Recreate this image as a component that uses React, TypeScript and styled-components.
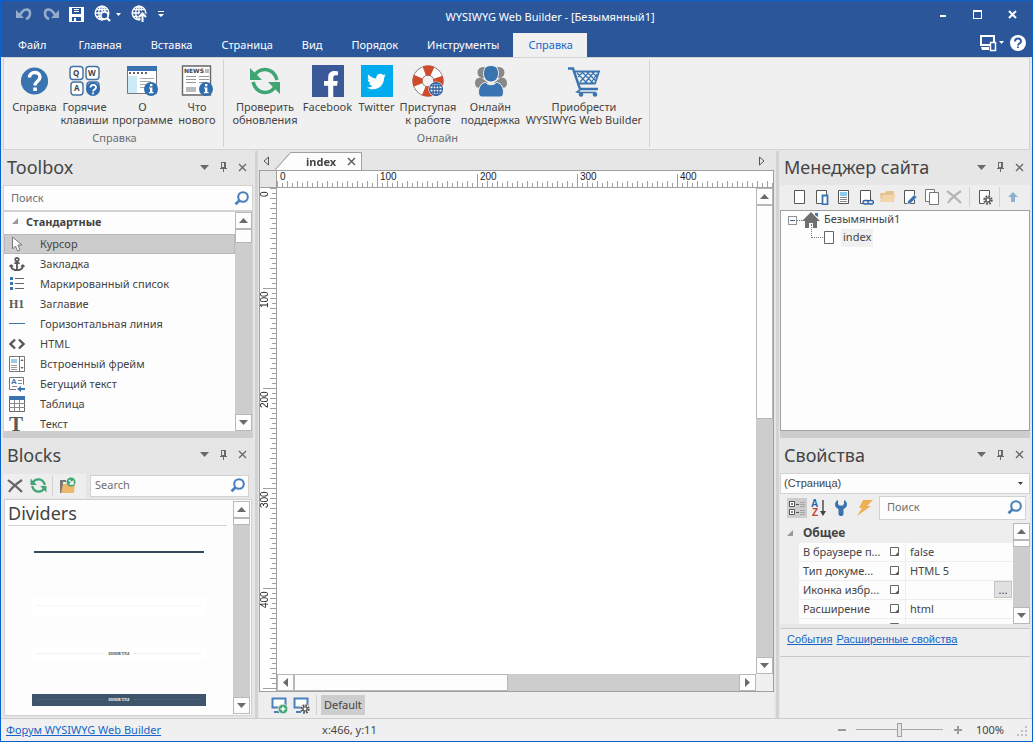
import React from "react";
import styled, { createGlobalStyle, css } from "styled-components";
import { FaAnchor, FaFacebookF, FaTwitter } from "react-icons/fa";

const c = {
  frame: "#0a63cc",
  blue: "#2b579a",
  icon: "#3a74b0",
  face: "#f0f0f0",
  panel: "#e6e6e6",
  bar: "#eeeeee",
  track: "#cdcdcd",
  line: "#d2d2d2",
  edge: "#a0a0a0",
  text: "#444444",
  grey: "#6a6a6a",
  green: "#3fa573",
};

const Global = createGlobalStyle`
  * { box-sizing: border-box; }
  body { margin: 0; background: ${c.panel}; }
  body, button, input, select { font-family: "Noto Sans", sans-serif; font-size: 11px; color: ${c.text}; }
  button { padding: 0; border: 0; background: none; display: flex; align-items: center; justify-content: center; }
  svg { display: block; flex: none; }
`;

/* ---------- window ---------- */
const Window = styled.div`
  height: 100vh;
  min-height: 600px;
  display: flex;
  flex-direction: column;
  border: 1px solid ${c.frame};
  overflow: hidden;
`;
const TitleBar = styled.header`
  height: 32px;
  flex: none;
  display: flex;
  align-items: center;
  background: ${c.blue};
  color: #fff;
`;
const QuickTools = styled.div`
  display: flex;
  align-items: center;
  padding: 0 0 6px 15px;
  width: 174px;
`;
const QuickButton = styled.button<{ $w?: number; $dim?: boolean }>`
  width: ${(p) => p.$w ?? 26}px;
  height: 20px;
  justify-content: flex-start;
  color: #fff;
  opacity: ${(p) => (p.$dim ? 0.5 : 1)};
`;
const Title = styled.h1`
  flex: 1;
  margin: 0;
  padding-bottom: 2px;
  font-size: 11px;
  font-weight: 400;
  text-align: center;
`;
const WindowButtons = styled.div`
  display: flex;
  padding: 0 2px 6px 0;
`;
const WindowButton = styled.button`
  width: 35px;
  height: 20px;
  color: #fff;
`;
const Menu = styled.nav`
  height: 24px;
  flex: none;
  display: flex;
  align-items: stretch;
  padding-left: 2px;
  background: ${c.blue};
`;
const MenuTab = styled.button<{ $active?: boolean }>`
  padding: 0 14px 2px 15px;
  color: ${(p) => (p.$active ? "#1a66c8" : "#fff")};
  background: ${(p) => (p.$active ? c.face : "none")};
  &:first-child { padding-right: 17px; }
`;
const MenuEnd = styled.div`
  margin-left: auto;
  display: flex;
  align-items: center;
  gap: 6px;
  padding: 0 6px 4px 0;
  color: #fff;
  button { color: #fff; }
`;

/* ---------- ribbon ---------- */
const Ribbon = styled.section`
  flex: none;
  height: 93px;
  margin: 0 2px 1px;
  display: flex;
  border: 1px solid ${c.line};
  background: ${c.face};
`;
const RibbonGroup = styled.div`
  display: flex;
  flex-direction: column;
  justify-content: space-between;
  margin: 2px 0;
  padding: 5px 4px 2px 6px;
  border-right: 1px solid ${c.line};
`;
const RibbonButtons = styled.div`
  display: flex;
`;
const RibbonButton = styled.button<{ $w: number }>`
  width: ${(p) => p.$w}px;
  flex-direction: column;
  justify-content: flex-start;
  line-height: 13px;
  white-space: pre;
  gap: 3px;
`;
const GroupLabel = styled.div`
  text-align: center;
  line-height: 15px;
  color: #6c6c6c;
`;
const LogoTile = styled.span<{ $bg: string; $low?: boolean }>`
  width: 32px;
  height: 32px;
  display: flex;
  align-items: ${(p) => (p.$low ? "flex-end" : "center")};
  justify-content: ${(p) => (p.$low ? "flex-end" : "center")};
  color: #fff;
  background: ${(p) => p.$bg};
`;

/* ---------- docking layout ---------- */
const Workspace = styled.main`
  flex: 1;
  min-height: 0;
  display: flex;
  padding: 0 2px;
  background: ${c.panel};
`;
const Side = styled.aside`
  width: 250px;
  flex: none;
  display: flex;
  flex-direction: column;
`;
const Splitter = styled.div`
  width: 3px;
  flex: none;
  margin: 0 1px 0 2px;
  background: #d3d3d3;
`;
const SideSplitter = styled.div`
  height: 7px;
  flex: none;
  background: ${c.track};
`;
const Panel = styled.section`
  flex: 1 1 0;
  min-height: 0;
  display: flex;
  flex-direction: column;
  &:last-child { padding-top: 1px; }
`;
const PanelHead = styled.div`
  height: 34px;
  flex: none;
  display: flex;
  align-items: center;
  padding: 0 1px 2px 4px;
  h2 {
    flex: 1;
    margin: 0;
    font-size: 18px;
    font-weight: 400;
    line-height: 24px;
  }
`;
const HeadButton = styled.button`
  width: 19px;
  height: 16px;
  color: ${c.grey};
`;

const SearchBox = styled.label<{ $h: number; $pad: number }>`
  flex: 1;
  min-width: 0;
  height: ${(p) => p.$h}px;
  display: flex;
  align-items: center;
  border: 1px solid ${c.line};
  background: #fdfdfd;
  padding: 0 3px 0 ${(p) => p.$pad}px;
  input {
    flex: 1;
    min-width: 0;
    border: 0;
    outline: 0;
    padding: 0 0 2px;
    background: none;
  }
  input::placeholder { color: #707070; opacity: 1; }
`;
const Line = styled.div`
  display: flex;
  flex: none;
`;

/* ---------- scroll bars ---------- */
const Scroll = styled.div<{ $across?: boolean }>`
  display: flex;
  flex: none;
  flex-direction: ${(p) => (p.$across ? "row" : "column")};
  ${(p) => (p.$across ? "height: 17px;" : "width: 17px;")}
  justify-content: space-between;
  background: ${c.track};
`;
const ScrollButton = styled.button`
  width: 17px;
  height: 17px;
  flex: none;
  border: 1px solid #b8b8b8;
  background: #fdfdfd;
  color: #6a6a6a;
`;
const ScrollTrack = styled.div`
  flex: 1;
  min-height: 0;
`;
const ScrollThumb = styled.div<{ $across?: boolean; $size: string }>`
  border: 1px solid #b8b8b8;
  background: #fdfdfd;
  ${(p) => (p.$across ? css`width: ${p.$size}; height: 17px;` : css`height: ${p.$size}; width: 17px;`)}
`;

/* ---------- toolbox ---------- */
const ToolArea = styled.div`
  flex: 1;
  min-height: 0;
  display: flex;
  border: solid ${c.line};
  border-width: 1px 1px 0 1px;
  background: #fdfdfd;
  overflow: hidden;
`;
const ToolList = styled.div`
  flex: 1;
  min-width: 0;
  overflow: hidden;
`;
const ToolGroup = styled.button`
  height: 22px;
  width: 100%;
  justify-content: flex-start;
  gap: 8px;
  padding: 0 0 4px 8px;
  font-weight: 700;
`;
const ToolRow = styled.button<{ $on?: boolean }>`
  width: 100%;
  height: 20px;
  justify-content: flex-start;
  padding: 0 4px;
  gap: 15px;
  border: 1px solid ${(p) => (p.$on ? "#b8b8b8" : "transparent")};
  background: ${(p) => (p.$on ? "#cccccc" : "none")};
`;
const RowLabel = styled.span`
  padding-bottom: 2px;
`;

/* ---------- blocks ---------- */
const BlockBar = styled.div`
  display: flex;
  align-items: center;
  flex: none;
  height: 26px;
  margin-right: 4px;
`;
const BarTools = styled.div`
  display: flex;
  align-items: center;
  width: 83px;
  height: 24px;
  margin-right: 4px;
  background: ${c.bar};
`;
const BarButton = styled.button<{ $w?: number; $on?: boolean }>`
  width: ${(p) => p.$w ?? 22}px;
  height: 20px;
  flex: none;
  background: ${(p) => (p.$on ? c.track : "none")};
`;
const BarRule = styled.span<{ $gap?: number }>`
  width: 1px;
  height: 20px;
  flex: none;
  margin: 0 ${(p) => p.$gap ?? 5}px;
  background: ${c.line};
`;
const BlockArea = styled.div`
  flex: 1;
  min-height: 0;
  display: flex;
  margin: 0 1px 2px;
  padding: 1px;
  border: 1px solid ${c.line};
  background: #fdfdfd;
`;
const BlockList = styled.div`
  flex: 1;
  min-width: 0;
  overflow: hidden;
  padding: 0 6px 0 2px;
  h3 {
    margin: 0;
    font-size: 18px;
    font-weight: 400;
    line-height: 24px;
    border-bottom: 1px solid ${c.line};
  }
`;
const BlockItem = styled.div<{ $h: number; $gap: number }>`
  display: flex;
  align-items: center;
  height: ${(p) => p.$h}px;
  margin: ${(p) => p.$gap}px 21px 0 24px;
  background: #fff;
`;
const DarkRule = styled.div`
  flex: 1;
  height: 2px;
  margin: 0 2px;
  background: #34495e;
`;
const DotRule = styled.div<{ $c: string }>`
  flex: 1;
  margin: 0 4px;
  border-top: 1px dotted ${(p) => p.$c};
`;
const DarkItem = styled(BlockItem)`
  background: #3e556c;
  color: #fff;
`;
const Caption = styled.span`
  font-size: 3px;
  font-weight: 700;
  line-height: 4px;
`;

/* ---------- editor ---------- */
const Center = styled.section`
  flex: 1;
  min-width: 0;
  display: flex;
  flex-direction: column;
`;
const TabStrip = styled.div`
  height: 19px;
  flex: none;
  display: flex;
  align-items: center;
  padding: 0 9px 0 3px;
`;
const ScrollTab = styled.button`
  width: 8px;
  height: 12px;
  color: #555;
`;
const DocTab = styled.div`
  align-self: stretch;
  display: flex;
  margin: 1px auto 0 5px;
  filter: drop-shadow(0 0 0 ${c.edge});
`;
const TabSlope = styled.svg`
  width: 16px;
  height: 18px;
`;
const TabFace = styled.div`
  display: flex;
  align-items: center;
  gap: 11px;
  padding: 0 5px 0 15px;
  border: solid ${c.edge};
  border-width: 1px 1px 0 0;
  border-radius: 0 2px 0 0;
  background: #fdfdfd;
  font-weight: 700;
  button { color: #555; }
`;
const Editor = styled.div`
  flex: 1;
  min-height: 0;
  display: grid;
  grid-template: 17px minmax(0, 1fr) 17px / 17px minmax(0, 1fr) 17px;
  border: 1px solid ${c.edge};
  background: #fff;
`;
const RulerCorner = styled.div`
  background: ${c.panel};
  border: solid ${c.edge};
  border-width: 0 1px 1px 0;
`;
const ticks = (dir: string) => css`
  background-image:
    repeating-linear-gradient(to ${dir}, #a0a0a0 0 1px, transparent 1px 5px),
    repeating-linear-gradient(to ${dir}, #a0a0a0 0 1px, transparent 1px 10px),
    repeating-linear-gradient(to ${dir}, #a0a0a0 0 1px, transparent 1px 100px);
  background-repeat: no-repeat;
`;
const RulerX = styled.div`
  grid-column: 2 / 4;
  display: flex;
  overflow: hidden;
  border-bottom: 1px solid ${c.edge};
  ${ticks("right")}
  background-position: left bottom, left bottom, 100px bottom;
  background-size: 100% 4px, 100% 6px, 100% 13px;
  font: 10px/10px "Liberation Sans", sans-serif;
  color: #222;
  span { flex: 0 0 100px; padding: 1px 3px; }
`;
const RulerY = styled.div`
  grid-row: 2 / 4;
  grid-column: 1;
  overflow: hidden;
  border-right: 1px solid ${c.edge};
  ${ticks("bottom")}
  background-position: right top, right top, right 100px;
  background-size: 4px 100%, 6px 100%, 13px 100%;
  font: 10px/10px "Liberation Sans", sans-serif;
  color: #222;
  span {
    display: block;
    height: 100px;
    width: 10px;
    padding: 0 0 3px;
    writing-mode: vertical-rl;
    transform: rotate(180deg);
    text-align: right;
  }
`;
const Canvas = styled.div`
  background: #fff;
`;
const CornerFill = styled.div`
  background: ${c.face};
`;
const BreakBar = styled.div`
  height: 26px;
  flex: none;
  display: flex;
  align-items: center;
  padding-left: 9px;
  background: ${c.bar};
`;
const DefaultButton = styled.button`
  height: 20px;
  padding: 0 3px 2px;
  background: ${c.track};
`;

/* ---------- site manager ---------- */
const SiteBar = styled.div`
  height: 25px;
  flex: none;
  display: flex;
  align-items: center;
  padding: 0 0 2px 9px;
  background: ${c.bar};
`;
const Tree = styled.ul`
  flex: 1;
  min-height: 0;
  margin: 0;
  padding: 0 0 0 7px;
  list-style: none;
  border: 1px solid ${c.edge};
  background: #fdfdfd;
  ul { list-style: none; margin: 0; padding: 0 0 0 23px; }
`;
const TreeRow = styled.div`
  display: flex;
  align-items: center;
  height: 18px;
`;
const TreeLabel = styled.span<{ $shade?: boolean; $gap: number }>`
  height: 18px;
  line-height: 16px;
  margin-left: ${(p) => p.$gap}px;
  padding: 0 2px;
  background: ${(p) => (p.$shade ? c.face : "none")};
`;
const Expander = styled.span`
  width: 9px;
  height: 9px;
  border: 1px solid #919191;
  display: flex;
  align-items: center;
  justify-content: center;
  &::after { content: ""; width: 5px; height: 1px; background: #4560a0; }
`;
const Dots = styled.span<{ $w: number }>`
  width: ${(p) => p.$w}px;
  border-top: 1px dotted #777;
`;
const Elbow = styled.span`
  width: 12px;
  height: 14px;
  align-self: flex-start;
  margin-top: -5px;
  border: dotted #777;
  border-width: 0 0 1px 1px;
`;

/* ---------- properties ---------- */
const PickObject = styled.select`
  appearance: none;
  height: 21px;
  flex: none;
  border: 1px solid ${c.line};
  border-radius: 0;
  padding: 0 3px;
  font-family: "Liberation Sans", sans-serif;
  background: #fdfdfd;
`;
const PickWrap = styled.div`
  position: relative;
  display: grid;
  flex: none;
  > svg { position: absolute; right: 7px; top: 9px; pointer-events: none; }
`;
const PropBar = styled.div`
  height: 29px;
  flex: none;
  display: flex;
  align-items: center;
  gap: 2px;
  padding: 0 4px 1px 7px;
  background: ${c.bar};
`;
const PropArea = styled.div`
  flex: 1;
  min-height: 0;
  display: flex;
  overflow: hidden;
  background: ${c.bar};
`;
const PropScroll = styled.div`
  flex: 1;
  min-width: 0;
  overflow: hidden;
`;
const PropTable = styled.table`
  width: 100%;
  table-layout: fixed;
  border-collapse: separate;
  border-spacing: 0;
  th, td {
    height: 19px;
    padding: 0 0 0 4px;
    text-align: left;
    font-weight: 400;
    line-height: 16px;
    white-space: nowrap;
    overflow: hidden;
    background: #fdfdfd;
    border: solid ${c.bar};
    border-width: 0 1px 1px 0;
  }
  tr > :first-child { background: none; border: 0; padding: 0 0 0 7px; }
  thead th { background: none; border: 0; height: 20px; font-weight: 700; font-size: 12px; }
  tr > :last-child { border-right: 0; }
`;
const NameCell = styled.span`
  display: flex;
  align-items: center;
  justify-content: space-between;
  padding-right: 5px;
`;
const ValueCell = styled.span`
  display: flex;
  align-items: center;
  justify-content: space-between;
`;
const MoreButton = styled.button`
  width: 18px;
  height: 17px;
  margin: 0 1px 0 auto;
  border: 1px solid #c4c4c4;
  background: #e1e1e1;
`;
const PropLinks = styled.div`
  flex: none;
  height: 29px;
  margin-top: 4px;
  display: flex;
  gap: 4px;
  padding: 4px 7px;
  border: solid #c8c8c8;
  border-width: 1px 0;
  background: ${c.bar};
  font-family: "Liberation Sans", sans-serif;
`;
const PropHelp = styled.div`
  flex: none;
  height: 61px;
  background: ${c.bar};
`;
const Link = styled.a`
  color: #1566c8;
  text-decoration: underline;
`;

/* ---------- status bar ---------- */
const Status = styled.footer`
  height: 23px;
  flex: none;
  display: flex;
  align-items: center;
  padding: 0 3px 1px 5px;
  border-top: 1px solid #cccccc;
  background: ${c.face};
`;
const Position = styled.span`
  margin: 0 auto 0 161px;
`;
const ZoomButton = styled.button`
  width: 16px;
  height: 16px;
  color: #9a9a9a;
`;
const ZoomRange = styled.input`
  appearance: none;
  width: 87px;
  height: 16px;
  margin: 0 7px 0 6px;
  background: linear-gradient(#a8a8a8, #a8a8a8) center / 100% 1px no-repeat;
  &::-webkit-slider-thumb {
    appearance: none;
    width: 5px;
    height: 14px;
    border: 1px solid #a0a0a0;
    background: ${c.panel};
  }
`;
const ZoomValue = styled.output`
  margin: 0 13px 0 10px;
`;

/* ---------- small glyphs ---------- */
const Tri = ({ dir, s = 9 }: { dir: "up" | "down" | "left" | "right"; s?: number }) => {
  const h = Math.ceil(s / 2);
  const across = dir === "left" || dir === "right";
  const d = {
    up: `M0 ${h}L${s / 2} 0L${s} ${h}z`,
    down: `M0 0L${s / 2} ${h}L${s} 0z`,
    left: `M${h} 0L0 ${s / 2}L${h} ${s}z`,
    right: `M0 0L${h} ${s / 2}L0 ${s}z`,
  }[dir];
  return <svg width={across ? h : s} height={across ? s : h}><path d={d} fill="currentColor" /></svg>;
};
const Cross = ({ s = 9, w = 2 }: { s?: number; w?: number }) => (
  <svg width={s} height={s} viewBox="0 0 9 9"><path d="M1 1l7 7M8 1l-7 7" stroke="currentColor" strokeWidth={w} /></svg>
);
const Pin = () => (
  <svg width="9" height="10" shapeRendering="crispEdges"><path d="M2 0h5v6H2zM3 1v4h2V1zM1 6h7v1H1zM4 7h1v3H4z" fill="currentColor" fillRule="evenodd" /></svg>
);
const Lens = () => (
  <svg width="15" height="15"><circle cx="9" cy="6" r="4.8" fill="none" stroke="#4a80bc" strokeWidth="2.1" /><path d="M5.400 9.600L1.500 13.300" stroke="#4a80bc" strokeWidth="2.8" /></svg>
);
const Corner = () => <svg width="6" height="6"><path d="M6 0v6H0z" fill="#999" /></svg>;
const GlobeLines = () => (
  <g fill="none" stroke="currentColor" strokeWidth="1.4">
    <circle cx="8" cy="8" r="6.8" /><ellipse cx="8" cy="8" rx="3.2" ry="6.8" /><path d="M8 1v14M1 8h14M2.4 4.6h11.2M2.4 11.4h11.2" />
  </g>
);
const Undo = ({ flip }: { flip?: boolean }) => (
  <svg width="17" height="14" viewBox="0 0 17 14"><g transform={flip ? "translate(17 0) scale(-1 1)" : undefined}>
    <path d="M3 9l3-4c3-4 8-3 8 1 0 3-1 5-4 6" fill="none" stroke="currentColor" strokeWidth="2.6" /><path d="M0 3v8h8z" fill="currentColor" /></g></svg>
);
const InfoDot = ({ x, y }: { x: number; y: number }) => (
  <g><circle cx={x} cy={y} r="7" fill="#2f6db0" /><path d={`M${x - 1} ${y - 5}h2.4v2.2h-2.4zM${x - 2} ${y - 1.6}h3.4v4.6h1.2v1.2h-4.8v-1.2h1.2v-3.4h-1z`} fill="#fff" /></g>
);
const Refresh = ({ s, w }: { s: number; w: number }) => (
  <svg width={s} height={s} viewBox="0 0 32 32">
    <g fill="none" stroke={c.green} strokeWidth={w}><path d="M5 12C9 2 24 1 28 15" /><path d="M27 20C23 30 8 31 4 17" /></g>
    <path d="M1 3v12h12zM31 29V17H19z" fill={c.green} />
  </svg>
);

/* ---------- ribbon icons ---------- */
const HelpIcon = () => (
  <svg width="32" height="32"><circle cx="15.500" cy="16" r="13.6" fill={c.icon} />
    <path d="M10.500 12.500c0-6.500 10.500-6.500 10.500-.5 0 4.500-5 4-5 8.500" fill="none" stroke="#fff" strokeWidth="3.4" /><path d="M14.200 22.500h3.700v3.500h-3.700z" fill="#fff" /></svg>
);
const KeyFace = styled.text`
  font: 700 8px "Noto Sans", sans-serif;
  fill: #444;
`;
const KeysIcon = () => (
  <svg width="32" height="32">
    <g fill="#fff" stroke="#44719f" strokeWidth="1.400"><rect x="1" y="1.500" width="13" height="13" rx="3" /><rect x="17" y="1.500" width="13" height="13" rx="3" /><rect x="2" y="17" width="12" height="13" rx="3" /><path d="M18 20a3 3 0 0 1 3-3h6a3 3 0 0 1 3 3v4H18z" /></g>
    <KeyFace x="4" y="11">Q</KeyFace><KeyFace x="19" y="11">W</KeyFace><KeyFace x="5" y="26">A</KeyFace>
    <circle cx="24" cy="24" r="7" fill="#2f6db0" /><path d="M21.500 22.500c0-3.500 5.500-3.500 5.500 0 0 2-3 2-3 4M24 27.500v1.800" fill="none" stroke="#fff" strokeWidth="1.800" />
  </svg>
);
const AboutIcon = () => (
  <svg width="32" height="32"><path d="M.5 1.500h29v27H.5z" fill="#fff" stroke="#777" /><path d="M0 1h30v5H0z" fill={c.icon} /><path d="M1 11h9v17H1z" fill="#cdeaf7" />
    <path d="M2 8h2M6 8h2M10 8h2M14 8h2M18 8h2" stroke="#666" strokeWidth="2" /><path d="M13 13.500h14M13 16.500h11M13 19.500h8M13 22.500h5" stroke="#aaa" /><InfoDot x={24} y={24} /></svg>
);
const NewsTitle = styled.text`
  font: 700 6px "DejaVu Sans", sans-serif;
  fill: #444;
`;
const NewsIcon = () => (
  <svg width="32" height="32"><path d="M1.500 1h28v29h-28z" fill="#fff" stroke="#666" strokeWidth="1.400" /><NewsTitle x="3" y="8">NEWS</NewsTitle><path d="M24 4h4v4h-4zM5 22h10v5H5z" fill="#bbb" />
    <path d="M5 11.500h10M5 14.500h10M5 17.500h10M18 11.500h10M18 14.500h10M18 17.500h7" stroke="#999" /><InfoDot x={25} y={24} /></svg>
);
const RingIcon = () => (
  <svg width="32" height="32"><circle cx="16" cy="16" r="10.500" fill="none" stroke="#777" strokeWidth="10" /><circle cx="16" cy="16" r="10.500" fill="none" stroke="#fff" strokeWidth="8.500" />
    <circle cx="16" cy="16" r="10.500" fill="none" stroke="#d04a2c" strokeWidth="10" strokeDasharray="8.250 8.240" strokeDashoffset="4.100" />
    <circle cx="24" cy="24" r="7.600" fill="#fff" /><g color="#2f5f9f" transform="translate(16.500 16.500) scale(.94)"><GlobeLines /></g></svg>
);
const PeopleIcon = () => (
  <svg width="32" height="32"><g fill="#888"><circle cx="8" cy="7.500" r="5.500" /><circle cx="24" cy="7.500" r="5.500" /><path d="M0 18c0-5 4-6 7-5l6 5-7 5c-4 0-6-1-6-5zM32 18c0-5-4-6-7-5l-6 5 7 5c4 0 6-1 6-5z" /></g>
    <path d="M16 .500c5 0 7.500 3 7.500 8 0 4.500-3 8.500-7.500 8.500s-7.500-4-7.500-8.500c0-5 2.500-8 7.500-8zM3.500 27c0-6 4-9.500 7-9.500 3 3 8 3 11 0 3 0 7 3.500 7 9.500 0 3-1 5-4 5h-17c-3 0-4-2-4-5z" fill={c.icon} stroke={c.face} strokeWidth="1" /></svg>
);
const CartIcon = () => (
  <svg width="32" height="32"><g fill="none" stroke={c.icon}><path d="M0 3.500h5L12 24h18" strokeWidth="2.400" /><path d="M7 6.500h24l-4 12H11" strokeWidth="1.800" /><path d="M12 25l-3 2 2 .500h17" strokeWidth="1.600" />
    <path d="M9 8l10 10M14 7l11 11M19 7l9 9M24 7l5 5M12 17l9-10M17 18l9-11M23 18l6-9M10 12l5-5" strokeWidth="1.300" /></g><circle cx="13" cy="29.500" r="2.300" fill={c.icon} /><circle cx="27" cy="29.500" r="2.300" fill={c.icon} /></svg>
);

/* ---------- toolbox icons ---------- */
const I16 = ({ children }: { children: React.ReactNode }) => <svg width="16" height="16">{children}</svg>;
const Letter = styled.text<{ $s: number; $f?: string; $c?: string }>`
  font: 700 ${(p) => p.$s}px ${(p) => p.$f ?? '"Liberation Serif", serif'};
  fill: ${(p) => p.$c ?? "#5a5a5a"};
`;
const tools: [string, React.ReactNode][] = [
  ["Курсор", <I16><path d="M3.500 1v12l3-3 2 5 2.500-1-2-5h4z" fill="#fff" stroke="#777" /></I16>],
  ["Закладка", <FaAnchor size={16} color="#555" />],
  ["Маркированный список", <I16><path d="M1 1h3v3H1zM1 6h3v3H1zM1 11h3v3H1z" fill={c.icon} /><path d="M6 2.500h9M6 7.500h9M6 12.500h9" stroke="#666" /></I16>],
  ["Заглавие", <I16><Letter x="0" y="12" $s={12}>H1</Letter></I16>],
  ["Горизонтальная линия", <I16><path d="M0 7.500h16" stroke={c.icon} /></I16>],
  ["HTML", <I16><path d="M6 3.500L1.500 8 6 12.500M10 3.500L14.500 8 10 12.500" fill="none" stroke="#555" strokeWidth="2.300" /></I16>],
  ["Встроенный фрейм", <I16><path d="M.5 .5h15v15H.5zM10.500 .5v15" fill="#fff" stroke="#777" /><path d="M2 3h6v4H2z" fill="#9ccbea" /><path d="M2 9.500h6M2 11.500h6M2 13.500h6" stroke="#999" /><path d="M11.500 5h3L13 3zM11.500 11h3L13 13z" fill="#555" /></I16>],
  ["Бегущий текст", <I16><path d="M7 13.500H.5V1.500h14v7" fill="#fff" stroke="#777" /><Letter x="2" y="8" $s={8} $f='"Liberation Sans"' $c={c.icon}>A</Letter><path d="M9 4.500h4M9 7.500h4M3 10.500h5" stroke="#888" /><path d="M8 13l4-3v2h4v2h-4v2z" fill={c.icon} /></I16>],
  ["Таблица", <I16><path d="M.5 .5h15v15H.5z" fill="#fff" stroke="#666" /><path d="M0 0h16v4H0z" fill={c.icon} /><path d="M0 7.500h16M0 11.500h16M5.500 4v12M10.500 4v12" stroke="#888" /></I16>],
  ["Текст", <I16><Letter x="0" y="15" $s={21}>T</Letter></I16>],
];

/* ---------- page icons ---------- */
const Sheet = ({ children }: { children?: React.ReactNode }) => (
  <svg width="16" height="16"><path d="M2.500 1.500h10v13h-10z" fill="#fff" stroke="#555" />{children}</svg>
);
const XMark = ({ color }: { color: string }) => (
  <I16><path d="M1 2c5 4 9 7 14 12M15 2C9 6 5 9 2 14" fill="none" stroke={color} strokeWidth="2.200" /></I16>
);
const Gear = ({ x, y, hole = "#fff" }: { x: number; y: number; hole?: string }) => (
  <g><circle cx={x} cy={y} r="2.800" fill="#555" /><circle cx={x} cy={y} r="3.700" fill="none" stroke="#555" strokeWidth="2" strokeDasharray="1.700 1.200" /><circle cx={x} cy={y} r="1.400" fill={hole} /></g>
);
const siteIcons: [string, React.ReactNode][] = [
  ["Новая страница", <Sheet />],
  ["Мобильная страница", <Sheet><path d="M8.500 6.500h5v9h-5z" fill="#fff" stroke={c.icon} strokeWidth="1.800" /></Sheet>],
  ["Шаблон", <Sheet><path d="M4 3h7v4H4z" fill="#8ecbf0" /><path d="M4 8.500h7M4 10.500h7M4 12.500h7" stroke="#888" /></Sheet>],
  ["Ссылка", <Sheet><g fill={c.bar} stroke="#2a61a8" strokeWidth="1.300"><rect x="5" y="11.500" width="6" height="3.500" rx="1.700" /><rect x="10" y="11.500" width="5.400" height="3.500" rx="1.700" /></g></Sheet>],
  ["Папка", <I16><path d="M0 4h5l1-2h8v11H1z" fill="#e7c293" /><path d="M3 6h13l-3 7H0z" fill="#f2d5a8" /></I16>],
  ["Изменить", <Sheet><path d="M6 12l6-6 3 2-6 6-4 1z" fill={c.icon} stroke={c.bar} strokeWidth=".5" /></Sheet>],
  ["Копировать", <I16><path d="M1.500 .5h9v12h-9z" fill="#fff" stroke="#777" /><path d="M5.500 3.500h9v12h-9z" fill="#fff" stroke="#777" /></I16>],
  ["Удалить", <XMark color="#b5b5b5" />],
];

const PropIcon = () => <svg width="10" height="9"><path d="M.5 .5h8v8h-8z" fill="#fff" stroke="#666" /><path d="M8.500 5v3.500H5z" fill="#555" /></svg>;
const BreakIcon = ({ children }: { children: React.ReactNode }) => (
  <svg width="17" height="17"><path d="M1.500 1.500h13v9h-13z" fill="#fff" stroke="#4a80bc" strokeWidth="2" /><path d="M3 15h5" stroke="#4a80bc" strokeWidth="2" />{children}</svg>
);

const Head = ({ title }: { title: string }) => (
  <PanelHead>
    <h2>{title}</h2>
    <HeadButton aria-label="Меню"><Tri dir="down" /></HeadButton>
    <HeadButton aria-label="Закрепить"><Pin /></HeadButton>
    <HeadButton aria-label="Закрыть"><Cross s={9} w={1.4} /></HeadButton>
  </PanelHead>
);
const Bar = ({ size, across }: { size: string; across?: boolean }) => (
  <Scroll $across={across}>
    <ScrollButton aria-label="Назад"><Tri dir={across ? "left" : "up"} /></ScrollButton>
    <ScrollTrack><ScrollThumb $size={size} $across={across} /></ScrollTrack>
    <ScrollButton aria-label="Вперёд"><Tri dir={across ? "right" : "down"} /></ScrollButton>
  </Scroll>
);
const Search = ({ hint, h, pad = 7 }: { hint: string; h: number; pad?: number }) => (
  <SearchBox $h={h} $pad={pad}><input type="text" placeholder={hint} aria-label={hint} /><Lens /></SearchBox>
);

const ribbonGroups: { label: string; items: [string, number, React.ReactNode][] }[] = [
  { label: "Справка", items: [
    ["Справка", 49, <HelpIcon />],
    ["Горячие\nклавиши", 51, <KeysIcon />],
    ["О\nпрограмме", 65, <AboutIcon />],
    ["Что\nнового", 44, <NewsIcon />],
  ] },
  { label: "Онлайн", items: [
    ["Проверить\nобновления", 70, <Refresh s={32} w={3.6} />],
    ["Facebook", 55, <LogoTile $bg="#3b5998" $low><FaFacebookF size={26} /></LogoTile>],
    ["Twitter", 43, <LogoTile $bg="#00acee"><FaTwitter size={19} /></LogoTile>],
    ["Приступая\nк работе", 60, <RingIcon />],
    ["Онлайн\nподдержка", 65, <PeopleIcon />],
    ["Приобрести\nWYSIWYG Web Builder", 122, <CartIcon />],
  ] },
];
const menus = ["Файл", "Главная", "Вставка", "Страница", "Вид", "Порядок", "Инструменты", "Справка"];
const props = [
  ["В браузере п...", "false"],
  ["Тип докуме...", "HTML 5"],
  ["Иконка избр...", ""],
  ["Расширение", "html"],
  ["Размер", "1000"],
];
const marks = [0, 100, 200, 300, 400];

export default function App() {
  return (
    <Window>
      <Global />
      <TitleBar>
        <QuickTools>
          <QuickButton $dim aria-label="Отменить"><Undo /></QuickButton>
          <QuickButton $dim $w={27} aria-label="Вернуть"><Undo flip /></QuickButton>
          <QuickButton $w={25} aria-label="Сохранить"><svg width="15" height="15" shapeRendering="crispEdges"><path d="M0 0h15v15H0zM3 1v6h9V1zM3 10v4h9v-4z" fill="#fff" fillRule="evenodd" /><path d="M5 2h5v1H5zM5 4h5v1H5zM5 11h2v3H5z" fill="#fff" /></svg></QuickButton>
          <QuickButton $w={22} aria-label="Просмотр"><svg width="18" height="18"><GlobeLines /><circle cx="10.500" cy="10.500" r="3.600" fill={c.blue} stroke="#fff" strokeWidth="1.600" /><path d="M13 13l3 3" stroke="#fff" strokeWidth="2.200" /></svg></QuickButton>
          <QuickButton $w={15} aria-label="Варианты просмотра"><Tri dir="down" s={5} /></QuickButton>
          <QuickButton $w={27} aria-label="Публикация"><svg width="18" height="18"><GlobeLines /><path d="M11.500 16V9M8 12l3.500-4 3.500 4" fill="none" stroke={c.blue} strokeWidth="4" /><path d="M11.500 17V9M8 12l3.500-3.500 3.500 3.500" fill="none" stroke="#fff" strokeWidth="2" /></svg></QuickButton>
          <QuickButton $w={8} aria-label="Настройка панели"><svg width="6" height="6"><path d="M0 0h6v1H0zM0 3h6L3 6z" fill="#fff" /></svg></QuickButton>
        </QuickTools>
        <Title>WYSIWYG Web Builder - [Безымянный1]</Title>
        <WindowButtons>
          <WindowButton aria-label="Свернуть"><svg width="6" height="9"><path d="M0 5h6v2H0z" fill="#fff" /></svg></WindowButton>
          <WindowButton aria-label="Развернуть"><svg width="9" height="9"><path d="M0 0h9v9H0zM1 2v6h7V2z" fill="#fff" fillRule="evenodd" /></svg></WindowButton>
          <WindowButton aria-label="Закрыть"><Cross /></WindowButton>
        </WindowButtons>
      </TitleBar>
      <Menu>
        {menus.map((m) => <MenuTab key={m} $active={m === "Справка"}>{m}</MenuTab>)}
        <MenuEnd>
          <button aria-label="Интерфейс"><svg width="24" height="17"><path d="M1 1h13v9H1z" fill="none" stroke="#fff" strokeWidth="2" /><path d="M1 12h8v3H2z" fill="#fff" /><path d="M10.500 7.500h5v8h-5z" fill={c.blue} stroke="#fff" strokeWidth="1.500" /><path d="M19 6h5l-2.500 3z" fill="#fff" /></svg></button>
          <button aria-label="Помощь"><svg width="16" height="16"><circle cx="8" cy="8" r="8" fill="#fff" /><path d="M5 6.500c0-4 6-4 6 0 0 2-3 2-3 4M8 11.500V13" fill="none" stroke={c.blue} strokeWidth="1.800" /></svg></button>
        </MenuEnd>
      </Menu>

      <Ribbon>
        {ribbonGroups.map((g) => (
          <RibbonGroup key={g.label}>
            <RibbonButtons>
              {g.items.map(([label, w, icon]) => <RibbonButton key={label} $w={w}>{icon}<span>{label}</span></RibbonButton>)}
            </RibbonButtons>
            <GroupLabel>{g.label}</GroupLabel>
          </RibbonGroup>
        ))}
      </Ribbon>

      <Workspace>
        <Side>
          <Panel>
            <Head title="Toolbox" />
            <Line><Search hint="Поиск" h={26} /></Line>
            <ToolArea>
              <ToolList>
                <ToolGroup><Corner />Стандартные</ToolGroup>
                {tools.map(([label, icon], i) => <ToolRow key={label} $on={i === 0}>{icon}<RowLabel>{label}</RowLabel></ToolRow>)}
              </ToolList>
              <Bar size="14px" />
            </ToolArea>
          </Panel>
          <SideSplitter />
          <Panel>
            <Head title="Blocks" />
            <BlockBar>
              <BarTools>
                <BarButton $w={24} aria-label="Удалить"><XMark color="#666" /></BarButton>
                <BarButton aria-label="Обновить"><Refresh s={17} w={4.4} /></BarButton>
                <BarRule $gap={3} />
                <BarButton aria-label="Открыть папку"><svg width="17" height="17"><path d="M1 3h6v2H4v11H1z" fill="#777" /><path d="M4 7h12l-1 9H2z" fill="#ecb96b" /><circle cx="12" cy="5" r="4.500" fill={c.green} /><path d="M10 3l3.500 3.500M14 3.500V7h-3.500" fill="none" stroke="#fff" strokeWidth="1.300" /></svg></BarButton>
              </BarTools>
              <Search hint="Search" h={22} pad={4} />
            </BlockBar>
            <BlockArea>
              <BlockList>
                <h3>Dividers</h3>
                <BlockItem $h={18} $gap={17}><DarkRule /></BlockItem>
                <BlockItem $h={18} $gap={36}><DotRule $c="#f0f0f0" /></BlockItem>
                <BlockItem $h={12} $gap={33}><DotRule $c="#e8e8e8" /><Caption>DIVIDER TITLE</Caption><DotRule $c="#e8e8e8" /></BlockItem>
                <DarkItem $h={12} $gap={34}><DotRule $c="#3c7078" /><Caption>DIVIDER TITLE</Caption><DotRule $c="#3c7078" /></DarkItem>
              </BlockList>
              <Bar size="7px" />
            </BlockArea>
          </Panel>
        </Side>
        <Splitter />

        <Center>
          <TabStrip>
            <ScrollTab aria-label="Предыдущая вкладка"><svg width="7" height="10"><path d="M5.500 1v8L1 5z" fill="none" stroke="currentColor" /></svg></ScrollTab>
            <DocTab>
              <TabSlope viewBox="0 0 16 18"><path d="M0 18L16 .5V18z" fill="#fdfdfd" /><path d="M0 18L15.500 .5H16" fill="none" stroke={c.edge} /></TabSlope>
              <TabFace>
                <span>index</span>
                <button aria-label="Закрыть вкладку"><Cross s={9} w={1.3} /></button>
              </TabFace>
            </DocTab>
            <ScrollTab aria-label="Следующая вкладка"><svg width="7" height="10"><path d="M1.500 1v8L6 5z" fill="none" stroke="currentColor" /></svg></ScrollTab>
          </TabStrip>
          <Editor>
            <RulerCorner />
            <RulerX>{marks.map((m) => <span key={m}>{m}</span>)}</RulerX>
            <RulerY>{marks.map((m) => <span key={m}>{m}</span>)}</RulerY>
            <Canvas />
            <Bar size="214px" />
            <Bar size="214px" across />
            <CornerFill />
          </Editor>
          <BreakBar>
            <BarButton aria-label="Добавить точку"><BreakIcon><circle cx="12" cy="12" r="4.800" fill={c.green} stroke={c.bar} strokeWidth=".8" /><path d="M9.500 12h5M12 9.500v5" stroke="#fff" strokeWidth="1.500" /></BreakIcon></BarButton>
            <BarButton aria-label="Настроить точки"><BreakIcon><circle cx="12" cy="12" r="5" fill={c.bar} /><Gear x={12} y={12} /></BreakIcon></BarButton>
            <BarRule $gap={4} />
            <DefaultButton>Default</DefaultButton>
          </BreakBar>
        </Center>
        <Splitter />

        <Side>
          <Panel>
            <Head title="Менеджер сайта" />
            <SiteBar>
              {siteIcons.map(([label, icon]) => <BarButton key={label} aria-label={label}>{icon}</BarButton>)}
              <BarRule $gap={4} />
              <BarButton aria-label="Свойства страницы"><Sheet><circle cx="11" cy="11" r="5" fill={c.bar} /><Gear x={11} y={11} /></Sheet></BarButton>
              <BarRule $gap={3} />
              <BarButton $w={20} aria-label="Вверх"><svg width="10" height="10"><path d="M5 0l5 5H7v5H3V5H0z" fill="#8fb0d3" /></svg></BarButton>
            </SiteBar>
            <Tree>
              <li>
                <TreeRow>
                  <Expander /><Dots $w={5} />
                  <svg width="18" height="17"><path d="M13 1h3v4l-3-2z" fill={c.icon} /><path d="M9 0l9 9h-3v7h-4v-5H7v5H3V9H0z" fill="#6f6f6f" /></svg>
                  <TreeLabel $gap={2}>Безымянный1</TreeLabel>
                </TreeRow>
                <ul>
                  <li>
                    <TreeRow>
                      <Elbow />
                      <svg width="12" height="14"><path d="M1.500 .5h9v12h-9z" fill="#fff" stroke="#666" /></svg>
                      <TreeLabel $shade $gap={6}>index</TreeLabel>
                    </TreeRow>
                  </li>
                </ul>
              </li>
            </Tree>
          </Panel>
          <SideSplitter />
          <Panel>
            <Head title="Свойства" />
            <PickWrap>
              <PickObject aria-label="Объект"><option>(Страница)</option></PickObject>
              <Tri dir="down" s={5} />
            </PickWrap>
            <PropBar>
              <BarButton $w={20} $on aria-label="По категориям"><svg width="18" height="16"><path d="M1.500 1.500h5v5h-5zM1.500 9.500h5v5h-5z" fill="#fff" stroke="#555" /><path d="M3 4h2M4 3v2M3 12h2M4 11v2M8 4.500h3M8 12.500h3" stroke="#555" /><path d="M12 2.500h5M12 4.500h5M12 6.500h5M12 10.500h5M12 12.500h5M12 14.500h5" stroke="#a5a5a5" /></svg></BarButton>
              <BarButton $w={20} aria-label="По алфавиту"><svg width="16" height="18"><Letter x="0" y="8" $s={10} $f='"Liberation Sans"' $c="#2a66b0">A</Letter><Letter x="1" y="17" $s={10} $f='"Liberation Sans"' $c="#c8402a">Z</Letter><path d="M12 1v12" stroke="#444" strokeWidth="1.400" /><path d="M9 12h6l-3 5z" fill="#444" /></svg></BarButton>
              <BarButton $w={20} aria-label="Свойства"><svg width="12" height="16"><path d="M3 0v4l1.500 1.500h3L9 4V0c2 1 3 2.500 3 4.500C12 6.500 10.500 8 8.500 9v5.500L7 16H5l-1.500-1.500V9C1.500 8 0 6.500 0 4.500 0 2.500 1 1 3 0z" fill={c.icon} /></svg></BarButton>
              <BarButton $w={24} aria-label="События"><svg width="16" height="16"><path d="M6 0h10L10 6h4L0 16l5-8H2z" fill="#edb056" /></svg></BarButton>
              <Search hint="Поиск" h={24} pad={7} />
            </PropBar>
            <PropArea>
              <PropScroll>
                <PropTable>
                  <colgroup><col width="19" /><col width="107" /><col /></colgroup>
                  <thead><tr><td><Corner /></td><th colSpan={2} scope="colgroup">Общее</th></tr></thead>
                  <tbody>
                    {props.map(([name, value]) => (
                      <tr key={name}>
                        <td />
                        <th scope="row"><NameCell>{name}<PropIcon /></NameCell></th>
                        <td><ValueCell>{value}{value === "" && <MoreButton aria-label="Выбрать иконку">...</MoreButton>}</ValueCell></td>
                      </tr>
                    ))}
                  </tbody>
                </PropTable>
              </PropScroll>
              <Bar size="7px" />
            </PropArea>
            <PropLinks><Link href="#events">События</Link><Link href="#advanced">Расширенные свойства</Link></PropLinks>
            <PropHelp />
          </Panel>
        </Side>
      </Workspace>

      <Status>
        <Link href="#forum">Форум WYSIWYG Web Builder</Link>
        <Position>x:466, y:11</Position>
        <ZoomButton aria-label="Уменьшить"><svg width="8" height="2"><path d="M0 0h8v2H0z" fill="currentColor" /></svg></ZoomButton>
        <ZoomRange type="range" aria-label="Масштаб" min={0} max={100} defaultValue={50} />
        <ZoomButton aria-label="Увеличить"><svg width="8" height="8"><path d="M3 0h2v3h3v2H5v3H3V5H0V3h3z" fill="currentColor" /></svg></ZoomButton>
        <ZoomValue>100%</ZoomValue>
        <svg width="12" height="12"><path d="M8 2h2v2H8zM4 6h2v2H4zM8 6h2v2H8zM0 10h2v2H0zM4 10h2v2H4zM8 10h2v2H8z" fill="#c0c0c0" /></svg>
      </Status>
    </Window>
  );
}
